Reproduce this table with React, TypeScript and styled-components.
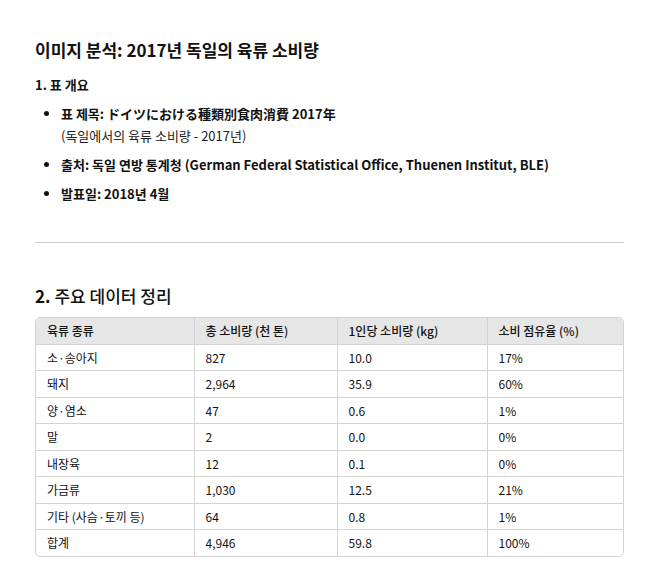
import styled, { createGlobalStyle } from 'styled-components';

const GlobalStyle = createGlobalStyle`
    body {
        margin: 0;
        background: #ffffff;
        color: #111111;
        font-family: "Noto Sans CJK KR", "Noto Sans", sans-serif;
    }
`;

const Page = styled.div`
    width: 589px;
    margin-left: 35px;
    padding-top: 37px;
`;
const Title = styled.h1`
    font-size: 17px;
    font-weight: 600;
    margin: 0 0 12px;
    line-height: 26px;
`;
const Heading = styled.h3`
    font-size: 13px;
    font-weight: 700;
    margin: 0 0 8px;
    line-height: 20px;
`;
const Bullets = styled.ul`
    margin: 0;
    padding-left: 26px;
    font-size: 13px;
    li {
        line-height: 22px;
        margin-bottom: 7px;
    }
`;
const Strong = styled.span`
    font-weight: 700;
`;
const Note = styled.span`
    font-weight: 400;
    color: #222222;
`;
const Divider = styled.hr`
    border: none;
    border-top: 1px solid #cccccc;
    margin: 37px 0 40px;
`;
const SubTitle = styled.h2`
    font-size: 17px;
    font-weight: 500;
    margin: 0 0 8px;
    line-height: 26px;
    b {
        font-weight: 700;
    }
`;
const TableWrap = styled.div`
    border: 1px solid #d4d4d4;
    border-radius: 5px;
    overflow: hidden;
`;
const Table = styled.table`
    width: 100%;
    border-collapse: collapse;
    font-size: 12px;
    table-layout: fixed;
`;
const Th = styled.th<{ $w: number }>`
    box-sizing: border-box;
    width: ${(p) => p.$w}px;
    background: #e6e6e6;
    font-weight: 500;
    text-align: left;
    height: 26px;
    padding: 0 11px;
    border-left: 1px solid #d4d4d4;
    border-bottom: 1px solid #d4d4d4;
    &:first-child {
        border-left: none;
    }
`;
const Td = styled.td`
    height: 25.5px;
    padding: 0 11px;
    border-left: 1px solid #d4d4d4;
    border-top: 1px solid #d4d4d4;
    &:first-child {
        border-left: none;
    }
`;
const Row = styled.tr`
    &:first-child td {
        border-top: none;
    }
`;

const rows = [
    ['소·송아지', '827', '10.0', '17%'],
    ['돼지', '2,964', '35.9', '60%'],
    ['양·염소', '47', '0.6', '1%'],
    ['말', '2', '0.0', '0%'],
    ['내장육', '12', '0.1', '0%'],
    ['가금류', '1,030', '12.5', '21%'],
    ['기타 (사슴·토끼 등)', '64', '0.8', '1%'],
    ['합계', '4,946', '59.8', '100%'],
];

export default function App() {
    return (
        <>
            <GlobalStyle />
            <Page>
                <Title>이미지 분석: 2017년 독일의 육류 소비량</Title>
                <Heading>1. 표 개요</Heading>
                <Bullets>
                    <li>
                        <Strong>표 제목: ドイツにおける種類別食肉消費 2017年</Strong>
                        <br />
                        <Note>(독일에서의 육류 소비량 - 2017년)</Note>
                    </li>
                    <li>
                        <Strong>출처: 독일 연방 통계청 (German Federal Statistical Office, Thuenen Institut, BLE)</Strong>
                    </li>
                    <li>
                        <Strong>발표일: 2018년 4월</Strong>
                    </li>
                </Bullets>
                <Divider />
                <SubTitle>
                    <b>2.</b> 주요 데이터 정리
                </SubTitle>
                <TableWrap>
                    <Table>
                        <thead>
                            <tr>
                                <Th $w={158}>육류 종류</Th>
                                <Th $w={143}>총 소비량 (천 톤)</Th>
                                <Th $w={150}>1인당 소비량 (kg)</Th>
                                <Th $w={138}>소비 점유율 (%)</Th>
                            </tr>
                        </thead>
                        <tbody>
                            {rows.map((r) => (
                                <Row key={r[0]}>
                                    {r.map((c, i) => (
                                        <Td key={i}>{c}</Td>
                                    ))}
                                </Row>
                            ))}
                        </tbody>
                    </Table>
                </TableWrap>
            </Page>
        </>
    );
}
